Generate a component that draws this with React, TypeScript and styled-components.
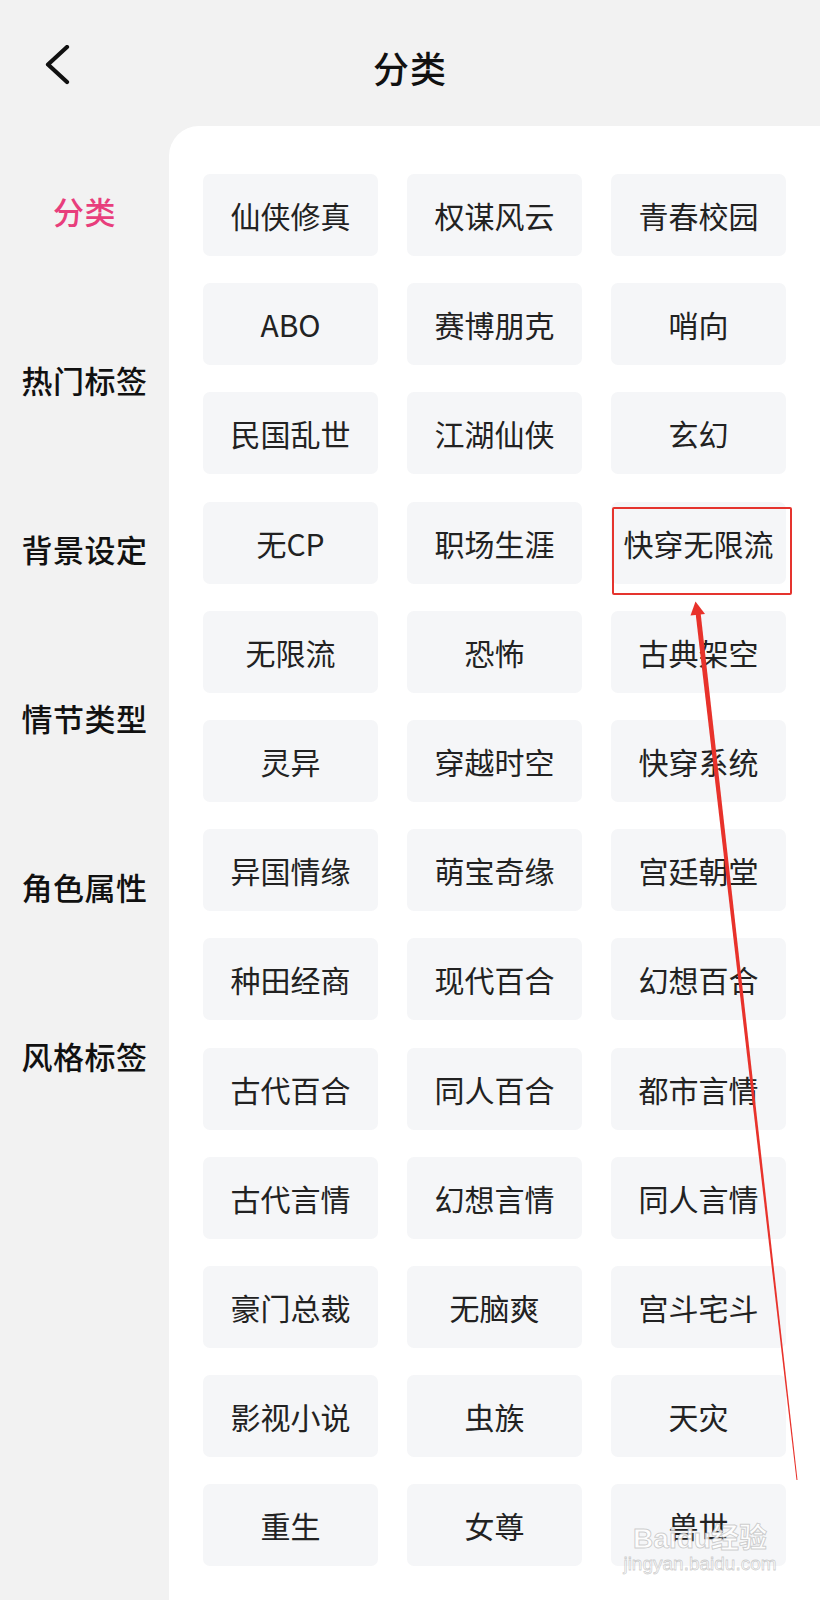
import styled, { createGlobalStyle } from "styled-components";

const GlobalStyle = createGlobalStyle`
  html, body {
    margin: 0;
    padding: 0;
    background: #f2f2f2;
  }
  body {
    font-family: "Noto Sans CJK SC", "Noto Sans", sans-serif;
  }
`;

const sections = ["分类", "热门标签", "背景设定", "情节类型", "角色属性", "风格标签"];

const tags = [
  "仙侠修真", "权谋风云", "青春校园",
  "ABO", "赛博朋克", "哨向",
  "民国乱世", "江湖仙侠", "玄幻",
  "无CP", "职场生涯", "快穿无限流",
  "无限流", "恐怖", "古典架空",
  "灵异", "穿越时空", "快穿系统",
  "异国情缘", "萌宝奇缘", "宫廷朝堂",
  "种田经商", "现代百合", "幻想百合",
  "古代百合", "同人百合", "都市言情",
  "古代言情", "幻想言情", "同人言情",
  "豪门总裁", "无脑爽", "宫斗宅斗",
  "影视小说", "虫族", "天灾",
  "重生", "女尊", "兽世",
];

const App: React.FC = () => {
  return (
    <>
      <GlobalStyle />
      <Page>
        <Header>
          <BackButton aria-label="返回">
            <svg width="26" height="40" viewBox="0 0 26 40" fill="none">
              <path
                d="M22 2 L3 19.5 L22 37"
                stroke="#111"
                strokeWidth="4.2"
                strokeLinecap="round"
                strokeLinejoin="round"
              />
            </svg>
          </BackButton>
          <Title>分类</Title>
          <span />
        </Header>

        <Body>
          <Sidebar>
            {sections.map((name, i) => (
              <SideItem key={name} $active={i === 0}>
                {name}
              </SideItem>
            ))}
          </Sidebar>

          <Panel>
            <TagGrid>
              {tags.map((tag) => (
                <Tag key={tag}>{tag}</Tag>
              ))}
            </TagGrid>
          </Panel>
        </Body>

        {/* hand-drawn annotation: box around one tag and an arrow pointing at it */}
        <MarkBox />
        <ArrowLayer width="820" height="1600" viewBox="0 0 820 1600">
          <polygon
            points="700.5,612 695.5,612.6 796.5,1480.1 797.5,1479.9"
            fill="#e8322b"
          />
          <polygon points="695.5,601.5 705,614 690.5,615.6" fill="#e8322b" />
        </ArrowLayer>

        <Watermark>
          <WatermarkBrand>Baidu经验</WatermarkBrand>
          <WatermarkUrl>jingyan.baidu.com</WatermarkUrl>
        </Watermark>
      </Page>
    </>
  );
};

export default App;

const Page = styled.div`
  position: relative;
  width: 820px;
  height: 1600px;
  overflow: hidden;
  background: #f2f2f2;
`;

const Header = styled.div`
  display: grid;
  grid-template-columns: 1fr auto 1fr;
  align-items: center;
  height: 126px;
  box-sizing: border-box;
`;

const BackButton = styled.button`
  display: flex;
  align-items: center;
  justify-self: start;
  margin-left: 45px;
  margin-top: 4px;
  padding: 0;
  border: none;
  background: none;
  cursor: pointer;
`;

const Title = styled.h1`
  margin: 8px 0 0;
  font-size: 36px;
  font-weight: 500;
  color: #111;
  letter-spacing: 1px;
`;

const Body = styled.div`
  display: flex;
  height: 1474px;
`;

const Sidebar = styled.nav`
  display: flex;
  flex-direction: column;
  width: 169px;
  flex-shrink: 0;
`;

const SideItem = styled.div<{ $active?: boolean }>`
  display: flex;
  align-items: center;
  justify-content: center;
  height: 169px;
  font-size: 31px;
  font-weight: 500;
  color: ${({ $active }) => ($active ? "#e83e7c" : "#111")};
  letter-spacing: 0.5px;
`;

const Panel = styled.main`
  flex: 1;
  background: #fff;
  border-top-left-radius: 30px;
  padding: 48px 0 0 34px;
`;

const TagGrid = styled.div`
  display: grid;
  grid-template-columns: repeat(3, 175px);
  grid-auto-rows: 82px;
  column-gap: 29px;
  row-gap: 27.2px;
`;

const Tag = styled.div`
  display: flex;
  align-items: center;
  justify-content: center;
  background: #f5f6f8;
  border-radius: 7px;
  font-size: 30px;
  color: #222;
  white-space: nowrap;
`;

const MarkBox = styled.div`
  position: absolute;
  left: 612px;
  top: 507px;
  width: 180px;
  height: 88px;
  box-sizing: border-box;
  border: 2.5px solid #e5342e;
  border-radius: 2px;
  pointer-events: none;
`;

const ArrowLayer = styled.svg`
  position: absolute;
  left: 0;
  top: 0;
  pointer-events: none;
`;

const Watermark = styled.div`
  position: absolute;
  left: 622px;
  top: 1524px;
  width: 156px;
  display: flex;
  flex-direction: column;
  align-items: center;
  pointer-events: none;
  font-family: "Liberation Sans", "Noto Sans CJK SC", sans-serif;
`;

const WatermarkBrand = styled.div`
  font-size: 28px;
  font-weight: 700;
  line-height: 30px;
  color: rgba(255, 255, 255, 0.85);
  -webkit-text-stroke: 1px rgba(150, 150, 150, 0.45);
`;

const WatermarkUrl = styled.div`
  font-size: 19px;
  line-height: 20px;
  color: rgba(255, 255, 255, 0.85);
  -webkit-text-stroke: 0.8px rgba(150, 150, 150, 0.45);
`;
